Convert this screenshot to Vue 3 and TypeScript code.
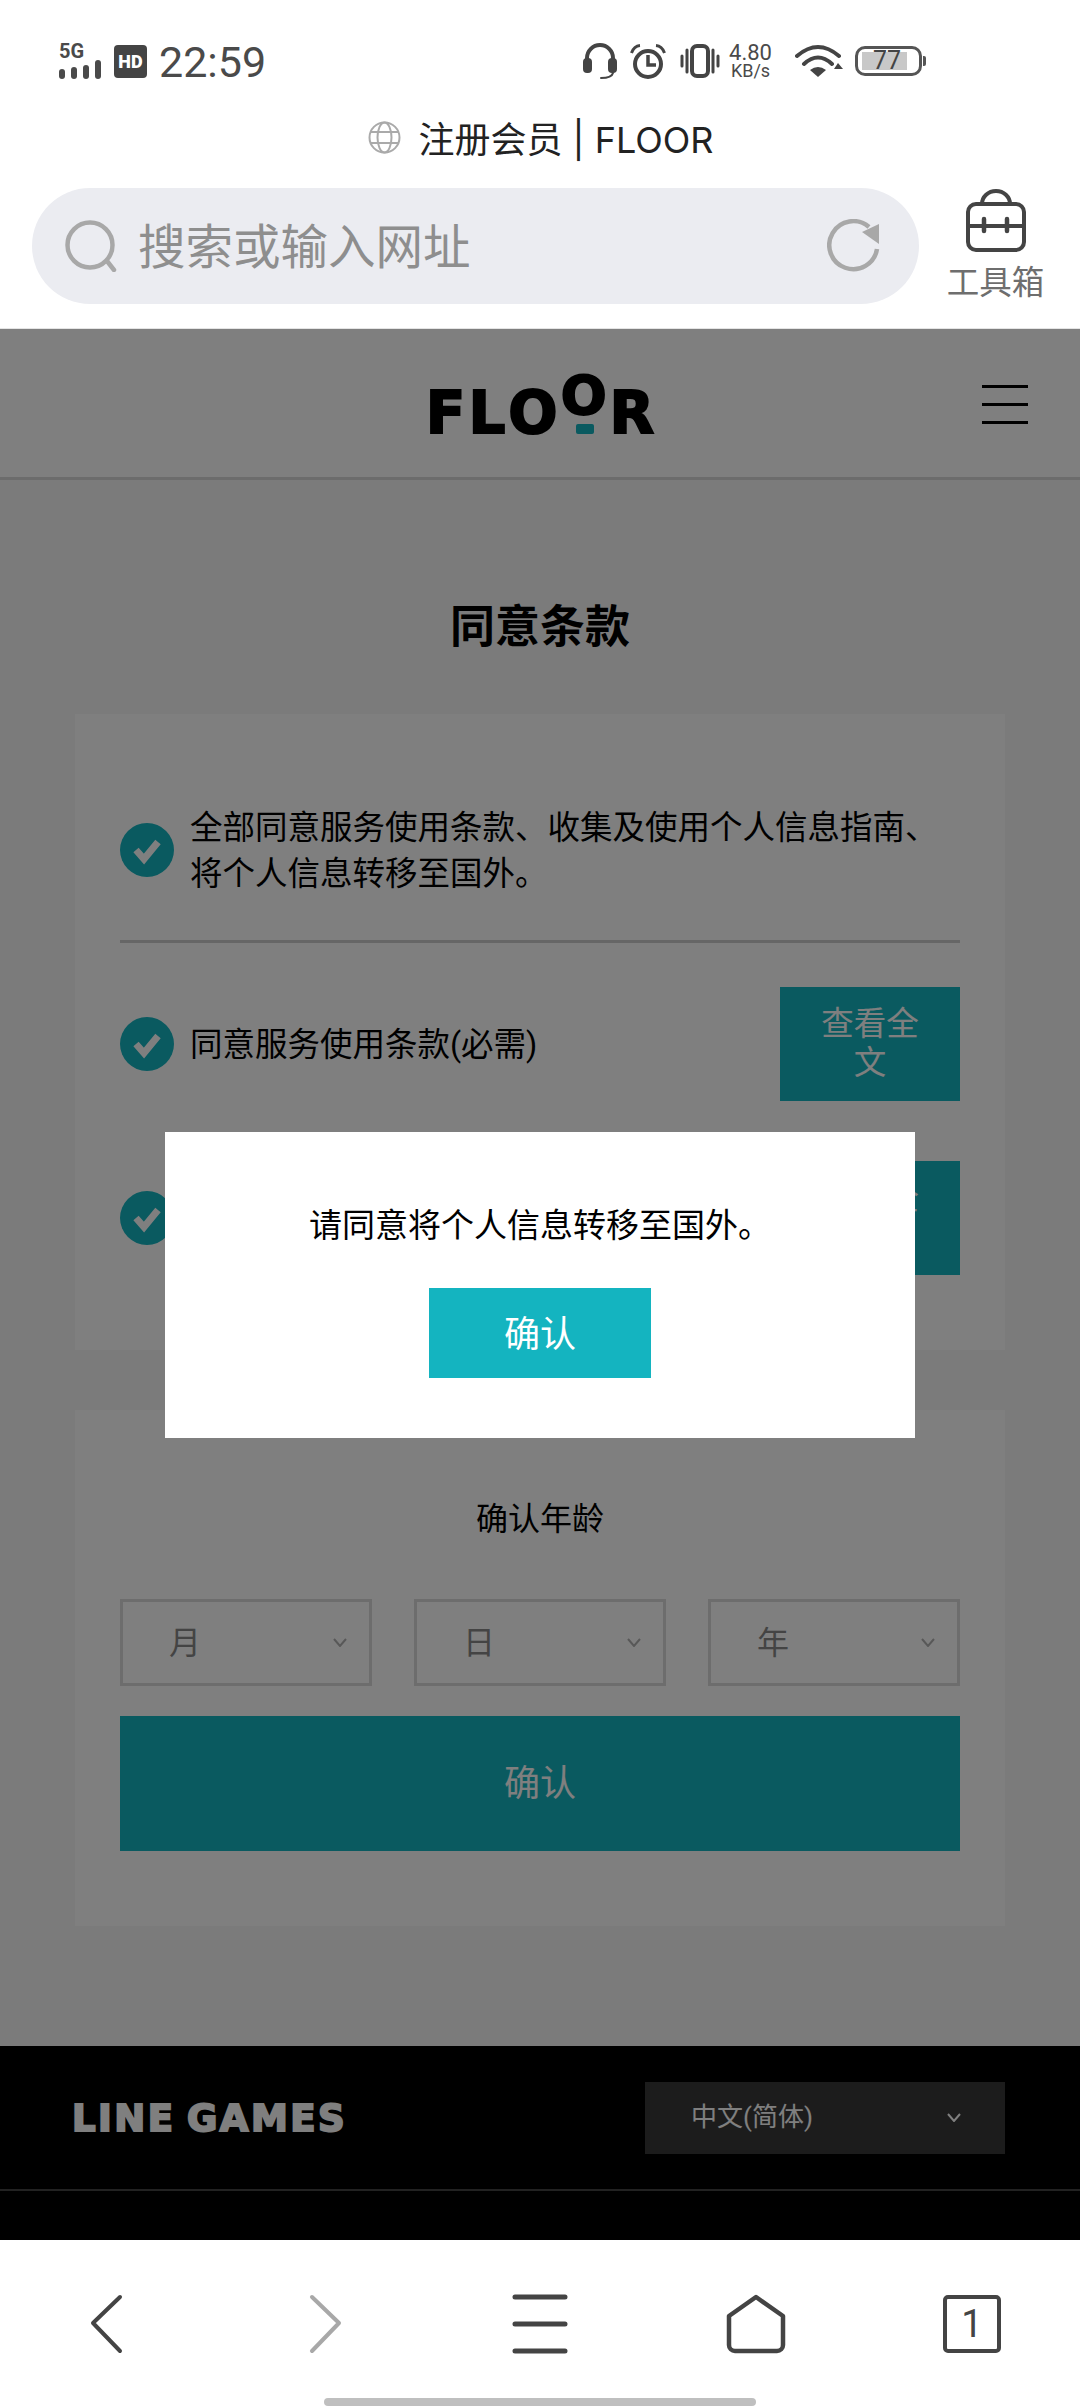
<script setup lang="ts">
import { ref } from 'vue';

interface Term {
  label: string;
  hasLink: boolean;
}

// second label sits behind the alert in this state
const terms: Term[] = [
  { label: '同意服务使用条款(必需)', hasLink: true },
  { label: '', hasLink: true },
];

const dateParts = ['月', '日', '年'];
const showAlert = ref(true);
const signalBars = [10, 12, 14, 19];
</script>

<template>
  <div class="screen">
    <!-- phone status bar -->
    <div class="status-bar">
      <div class="status-left">
        <div class="signal">
          <span class="five-g">5G</span>
          <div class="bars">
            <i v-for="h in signalBars" :key="h" :class="'bar-' + h"></i>
          </div>
        </div>
        <span class="hd">HD</span>
        <span class="time">22:59</span>
      </div>
      <div class="status-right">
        <svg class="st-headset" width="34" height="37" viewBox="0 0 34 37" fill="none">
          <path d="M4 20V15a13 13 0 0 1 26 0v5" stroke="#444" stroke-width="4" />
          <rect x="0" y="15" width="9" height="15" rx="4" fill="#444" />
          <rect x="25" y="15" width="9" height="15" rx="4" fill="#444" />
          <path d="M30 30c-1 4-6 5-12 5" stroke="#444" stroke-width="2" stroke-linecap="round" />
        </svg>
        <svg class="st-alarm" width="36" height="35" viewBox="0 0 36 35" fill="none">
          <circle cx="18" cy="20" r="13" stroke="#444" stroke-width="4" />
          <path d="M18 11v10h8" stroke="#444" stroke-width="3.5" />
          <path d="M1.5 9Q4 2 10 1.5M34.500 9Q32 2 26 1.5" stroke="#444" stroke-width="3" />
        </svg>
        <svg class="st-vibrate" width="40" height="34" viewBox="0 0 40 34" fill="none">
          <rect x="12" y="2" width="16" height="30" rx="5" stroke="#444" stroke-width="4" />
          <path d="M2 12v10M7 6v22M33 6v22M38 12v10" stroke="#444" stroke-width="3" stroke-linecap="round" />
        </svg>
        <div class="speed">
          <span class="speed-num">4.80</span>
          <span class="speed-unit">KB/s</span>
        </div>
        <svg class="st-wifi" width="48" height="34" viewBox="0 0 48 34" fill="none">
          <path d="M2 12Q23-6 44 12M9 20Q23 7 37 20" stroke="#444" stroke-width="4" stroke-linecap="round" />
          <path d="M15 26Q23 20 31 26L23 33Z" fill="#444" />
          <path d="M43 19l5 6h-9z" fill="#444" />
        </svg>
        <div class="battery">
          <div class="battery-body">
            <div class="battery-fill">77</div>
          </div>
          <i class="battery-nub"></i>
        </div>
      </div>
    </div>

    <!-- browser address bar -->
    <div class="browser-top">
      <div class="page-title">
        <svg width="33" height="33" viewBox="0 0 33 33" fill="none" stroke="#aaa" stroke-width="2">
          <circle cx="16.500" cy="16.500" r="15" />
          <ellipse cx="16.500" cy="16.500" rx="7" ry="15" />
          <path d="M3 11h27M3 22h27" />
        </svg>
        <span>注册会员 | FLOOR</span>
      </div>
      <div class="url-row">
        <div class="url-pill">
          <svg width="52" height="52" viewBox="0 0 52 52" fill="none" stroke="#a8a8a8" stroke-width="4.500">
            <circle cx="25" cy="25" r="22.500" />
            <path d="M42 41l7 9" stroke-linecap="round" />
          </svg>
          <span class="url-placeholder">搜索或输入网址</span>
          <svg class="refresh" width="54" height="54" viewBox="0 0 54 54" fill="none">
            <path d="M42 8A24 24 0 1 0 50 30" stroke="#a8a8a8" stroke-width="4.500" />
            <path d="M35 13L52 5v20z" fill="#a8a8a8" />
          </svg>
        </div>
        <div class="toolbox">
          <svg width="62" height="64" viewBox="0 0 62 64" fill="none" stroke="#444" stroke-width="4">
            <rect x="3" y="15" width="56" height="46" rx="8" />
            <path d="M17 15a14 13 0 0 1 28 0" />
            <path d="M3 37h56" />
            <path d="M19 30v12M42 30v12" stroke-width="4.500" stroke-linecap="round" />
          </svg>
          <span>工具箱</span>
        </div>
      </div>
    </div>

    <!-- web page, dimmed by the alert -->
    <div class="page">
      <header class="site-header">
        <div class="logo">
          <span>F</span><span>L</span><span>O</span><span class="logo-up">O</span><span>R</span>
          <i class="logo-dot"></i>
        </div>
        <div class="hamburger"><i></i><i></i><i></i></div>
      </header>

      <main class="content">
        <h1>同意条款</h1>

        <section class="card terms">
          <div class="term-all">
            <svg class="check" viewBox="0 0 54 54">
              <circle cx="27" cy="27" r="27" fill="#14b4c0" />
              <path d="M16 27l8 9 14-17" fill="none" stroke="#fff" stroke-width="7" />
            </svg>
            <p>全部同意服务使用条款、收集及使用个人信息指南、将个人信息转移至国外。</p>
          </div>
          <div class="divider"></div>
          <div class="term-list">
            <div v-for="(term, i) in terms" :key="i" class="term-row">
              <svg class="check" viewBox="0 0 54 54">
                <circle cx="27" cy="27" r="27" fill="#14b4c0" />
                <path d="M16 27l8 9 14-17" fill="none" stroke="#fff" stroke-width="7" />
              </svg>
              <p>{{ term.label }}</p>
              <button v-if="term.hasLink" class="view-btn">查看全文</button>
            </div>
          </div>
        </section>

        <section class="card age">
          <h2>确认年龄</h2>
          <div class="date-row">
            <div v-for="part in dateParts" :key="part" class="date-select">
              <span class="date-label">{{ part }}</span>
              <svg width="14" height="9" viewBox="0 0 14 9" fill="none" stroke="#b0b0b0" stroke-width="2">
                <path d="M1 1l6 7 6-7" />
              </svg>
            </div>
          </div>
          <button class="confirm-btn"><span>确认</span></button>
        </section>
      </main>

      <footer class="site-footer">
        <div class="footer-row">
          <span class="line-games">LINE GAMES</span>
          <div class="lang-select">
            <span class="lang-label">中文(简体)</span>
            <svg width="14" height="9" viewBox="0 0 14 9" fill="none" stroke="#fff" stroke-width="2">
              <path d="M1 1l6 7 6-7" />
            </svg>
          </div>
        </div>
        <div class="footer-rest"></div>
      </footer>

      <div v-if="showAlert" class="scrim">
        <div class="alert">
          <p>请同意将个人信息转移至国外。</p>
          <button class="alert-btn" @click="showAlert = false">确认</button>
        </div>
      </div>
    </div>

    <!-- browser bottom bar -->
    <nav class="browser-bottom">
      <div class="nav-icons">
        <svg width="60" height="60" viewBox="0 0 60 60" fill="none" stroke="#444" stroke-width="4" stroke-linecap="round" stroke-linejoin="round">
          <path d="M42 3L15 29L42 57" />
        </svg>
        <svg width="60" height="60" viewBox="0 0 60 60" fill="none" stroke="#a8a8a8" stroke-width="4" stroke-linecap="round" stroke-linejoin="round">
          <path d="M18 3L45 29L18 57" />
        </svg>
        <svg width="60" height="60" viewBox="0 0 60 60" fill="none" stroke="#444" stroke-width="5" stroke-linecap="round">
          <path d="M5 3h50M5 30h50M5 57h50" />
        </svg>
        <svg width="60" height="60" viewBox="0 0 60 60" fill="none" stroke="#444" stroke-width="4.500" stroke-linejoin="round">
          <path d="M30 3L57 22V51a6 6 0 0 1-6 6H9a6 6 0 0 1-6-6V22Z" />
        </svg>
        <div class="tab-count">1</div>
      </div>
      <div class="home-bar"></div>
    </nav>
  </div>
</template>

<style scoped>
.screen { width: 1080px; height: 2408px; display: flex; flex-direction: column; overflow: hidden; background: #fff; font-family: "Roboto", "Noto Sans CJK SC", sans-serif; color: #000; }

/* Status bar */
.status-bar { height: 100px; box-sizing: border-box; padding: 22px 154px 0 59px; display: flex; justify-content: space-between; align-items: center; color: #4a4a4a; }
.status-left, .status-right { display: flex; align-items: center; }
.signal { width: 44px; display: flex; flex-direction: column; }
.five-g { font-size: 20px; line-height: 15px; font-weight: 700; }
.bars { display: flex; gap: 6px; align-items: flex-end; height: 19px; margin-top: 1px; }
.bars i { width: 6px; background: #4a4a4a; border-radius: 3px; }
.bars .bar-10 { height: 10px; }
.bars .bar-12 { height: 12px; }
.bars .bar-14 { height: 14px; }
.bars .bar-19 { height: 19px; }
.hd { width: 33px; height: 33px; margin-left: 11px; background: #444; border-radius: 4px; color: #fff; font-size: 18px; font-weight: 900; line-height: 33px; text-align: center; }
.time { margin-left: 12px; font-size: 43px; line-height: 44px; padding-top: 2px; }
.st-headset { margin-right: 13px; }
.st-alarm { margin-right: 14px; }
.st-vibrate { margin-right: 7px; }
.speed { width: 47px; display: flex; flex-direction: column; align-items: center; margin-right: 21px; }
.speed-num { font-size: 22px; line-height: 18px; }
.speed-unit { font-size: 18px; line-height: 17px; }
.battery { display: flex; align-items: center; gap: 1px; margin-left: 12px; }
.battery-body { width: 67px; height: 30px; box-sizing: border-box; border: 3px solid #555; border-radius: 10px; padding: 3px; }
.battery-fill { width: 45px; height: 18px; box-sizing: border-box; padding-right: 6px; background: #c8c8c8; font-size: 25px; line-height: 18px; text-align: right; color: #444; margin-left: 1px; }
.battery-nub { width: 3px; height: 10px; background: #555; border-radius: 0 2px 2px 0; }

/* Browser top */
.browser-top { height: 229px; box-sizing: border-box; border-bottom: 1px solid #e4e4e4; }
.page-title { height: 88px; box-sizing: border-box; padding: 0 0 14px 2px; display: flex; align-items: center; justify-content: center; gap: 17px; font-family: "Inter", "Noto Sans CJK SC", sans-serif; font-size: 36px; color: #222; }
.url-row { display: flex; align-items: flex-start; padding-left: 32px; }
.url-pill { width: 887px; height: 116px; box-sizing: border-box; padding: 0 38px 0 33px; background: #ebecf1; border-radius: 58px; display: flex; align-items: center; }
.url-placeholder { margin-left: 21px; padding-bottom: 5px; font-size: 47.500px; color: #8e8e8e; flex: 1; }
.toolbox { width: 153px; display: flex; flex-direction: column; align-items: center; padding-top: 1px; color: #6e6e6e; font-size: 32.500px; line-height: 46px; }
.toolbox svg { margin-bottom: 7px; }

/* Web page */
.page { position: relative; flex: 1; display: flex; flex-direction: column; background: #f6f6f6; }
.site-header { height: 148px; flex-shrink: 0; position: relative; background: #fff; border-bottom: 3px solid #d8d8d8; display: flex; align-items: center; justify-content: center; }
.logo { position: relative; display: flex; align-items: flex-end; gap: 3px; height: 41px; margin-top: 20px; font-family: "DejaVu Sans", sans-serif; font-weight: 700; font-size: 58px; line-height: 41px; color: #000; -webkit-text-stroke: 2px #000; }
.logo span { display: block; height: 41px; }
.logo .logo-up { font-size: 54px; transform: translateY(-18px); }
.logo-dot { position: absolute; left: 150px; bottom: 0; width: 18px; height: 10px; background: #14b4c0; border-radius: 2px; }
.hamburger { position: absolute; right: 52px; top: 56px; width: 46px; display: flex; flex-direction: column; gap: 15px; }
.hamburger i { display: block; height: 3px; background: #000; }

.content { flex: 1; padding: 118px 75px 120px; }
h1 { margin: 0 0 56px; font-size: 45px; line-height: 60px; font-weight: 700; text-align: center; }
.card { background: #fff; padding: 0 45px; }
.terms { padding-top: 89px; padding-bottom: 75px; margin-bottom: 60px; }
.term-all, .term-row { display: flex; align-items: center; }
p { margin: 0; padding-top: 2px; font-size: 32.500px; line-height: 46px; }
.check { width: 54px; height: 54px; flex-shrink: 0; margin-right: 16px; }
.divider { height: 3px; background: #ccc; margin: 43px 0 44px; }
.term-list { display: flex; flex-direction: column; gap: 60px; }
.term-row p { flex: 1; }
.view-btn { width: 180px; height: 114px; padding: 0 30px; flex-shrink: 0; border: 0; background: #14b4c0; color: #fff; font: inherit; font-size: 32.500px; line-height: 39px; }

.age { padding-top: 86px; padding-bottom: 75px; }
h2 { margin: 0 0 57px; font-size: 32px; line-height: 46px; font-weight: 400; text-align: center; }
.date-row { display: grid; grid-template-columns: repeat(3, 252px); justify-content: space-between; margin-bottom: 30px; }
.date-select { height: 87px; box-sizing: border-box; border: 3px solid #dadada; padding: 0 22px 0 46px; display: flex; justify-content: space-between; align-items: center; color: #888; font-size: 32px; }
.date-label { padding-bottom: 5px; }
.confirm-btn { display: block; width: 100%; height: 135px; padding: 0 0 7px; border: 0; background: #14b4c0; color: #fff; font: inherit; font-size: 36px; }

.site-footer { flex-shrink: 0; background: #000; }
.footer-row { height: 145px; box-sizing: border-box; padding: 0 75px; border-bottom: 2px solid #444; display: flex; justify-content: space-between; align-items: center; }
.line-games { margin: 2px 0 0 -3px; font-family: "DejaVu Sans", sans-serif; font-weight: 700; font-size: 37px; line-height: 40px; letter-spacing: 2.500px; word-spacing: -4px; color: #fff; -webkit-text-stroke: 2px #fff; }
.lang-select { width: 360px; height: 72px; box-sizing: border-box; padding: 0 44px 0 46px; background: #383838; color: #fff; font-size: 26px; display: flex; justify-content: space-between; align-items: center; }
.lang-label { padding-bottom: 7px; }
.footer-rest { height: 49px; }

.scrim { position: absolute; inset: 0; background: rgba(0, 0, 0, 0.5); display: flex; align-items: center; justify-content: center; }
.alert { width: 750px; height: 306px; box-sizing: border-box; padding-top: 69px; background: #fff; display: flex; flex-direction: column; align-items: center; }
.alert p { font-size: 33px; }
.alert-btn { width: 222px; height: 90px; margin-top: 39px; padding: 0 0 3px; border: 0; background: #14b4c0; color: #fff; font: inherit; font-size: 36px; }

/* Browser bottom */
.browser-bottom { height: 168px; flex-shrink: 0; background: #fff; display: flex; flex-direction: column; align-items: center; }
.nav-icons { width: 100%; display: grid; grid-template-columns: repeat(5, 216px); justify-items: center; align-items: center; padding-top: 54px; }
.tab-count { width: 58px; height: 58px; box-sizing: border-box; border: 4px solid #444; border-radius: 5px; text-align: center; font-size: 38px; line-height: 50px; color: #444; }
.home-bar { width: 432px; height: 8px; margin-top: 44px; background: #bfbfbf; border-radius: 4px; }
</style>
